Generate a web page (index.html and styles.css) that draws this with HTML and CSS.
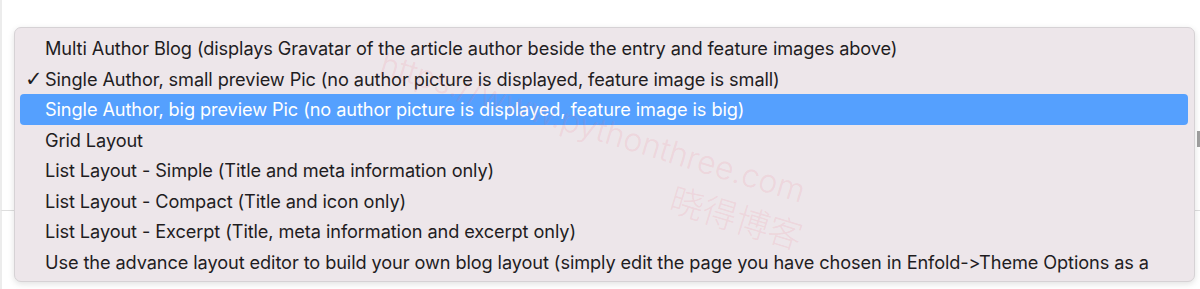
FILE: index.html
```html
<!DOCTYPE html>
<html lang="en">
<head>
    <meta charset="UTF-8">
    <meta name="viewport" content="width=device-width, initial-scale=1.0">
    <title>Blog Layout Select</title>
    <link rel="stylesheet" href="styles.css">
</head>
<body>

    <div class="page">
        <div class="backdrop">
            <div class="backdrop-top"></div>
            <div class="backdrop-bottom"></div>
        </div>
        <div class="scroll-thumb"></div>

        <div class="menu">
            <ul class="options">
                <li class="option">Multi Author Blog (displays Gravatar of the article author beside the entry and feature images above)</li>
                <li class="option checked">Single Author, small preview Pic (no author picture is displayed, feature image is small)</li>
                <li class="option active">Single Author, big preview Pic (no author picture is displayed, feature image is big)</li>
                <li class="option">Grid Layout</li>
                <li class="option">List Layout - Simple (Title and meta information only)</li>
                <li class="option">List Layout - Compact (Title and icon only)</li>
                <li class="option">List Layout - Excerpt (Title, meta information and excerpt only)</li>
                <li class="option">Use the advance layout editor to build your own blog layout (simply edit the page you have chosen in Enfold-&gt;Theme Options as a</li>
            </ul>
            <div class="watermark">
                <span class="wm-url">https://www.pythonthree.com</span>
                <span class="wm-name">晓得博客</span>
            </div>
        </div>
    </div>

</body>
</html>
```

FILE: styles.css
```css
body {
    margin: 0;
    background: #fff;
    font-family: Inter, "Noto Sans", sans-serif;
    color: #1f1d1f;
    overflow: hidden;
}
.page {
    position: relative;
    width: 1200px;
    height: 289px;
}
.backdrop {
    position: absolute;
    left: 0;
    top: 0;
    width: 1200px;
    height: 289px;
}
.backdrop-top {
    height: 211px;
    border-left: 2px solid #ececec;
    border-bottom: 1px solid #dedede;
    box-sizing: border-box;
}
.backdrop-bottom {
    height: 78px;
    border-left: 2px solid #ececec;
    box-sizing: border-box;
}
.scroll-thumb {
    position: absolute;
    left: 1197px;
    top: 131px;
    width: 3px;
    height: 16px;
    background: #a0a0a0;
}
.menu {
    position: absolute;
    left: 14px;
    top: 27px;
    width: 1181px;
    height: 255px;
    box-sizing: border-box;
    background: #ede6ea;
    border: 1px solid #d6d2d5;
    border-radius: 7px;
    box-shadow: 0 2px 6px rgba(0, 0, 0, 0.12);
    padding: 5px 6px 0 5px;
    overflow: hidden;
}
.options {
    list-style: none;
    margin: 0;
    padding: 0;
}
.option {
    position: relative;
    height: 30.5px;
    line-height: 30.5px;
    padding-left: 25px;
    font-size: 18.2px;
    letter-spacing: -0.1px;
    white-space: nowrap;
    border-radius: 4px;
}
.option.checked::before {
    content: "\2713";
    position: absolute;
    left: 5px;
    top: 0;
    font-family: "DejaVu Sans", sans-serif;
    font-weight: bold;
    font-size: 21px;
}
.option.active {
    background: #55a0fe;
    color: #fff;
}
.watermark {
    position: absolute;
    left: 0;
    top: 0;
    color: rgba(240, 110, 130, 0.15);
    pointer-events: none;
}
.wm-url {
    position: absolute;
    left: 372px;
    top: 16px;
    font-size: 32px;
    font-weight: 300;
    white-space: nowrap;
    transform: rotate(17deg);
    transform-origin: left top;
}
.wm-name {
    position: absolute;
    left: 664px;
    top: 145px;
    font-family: "Noto Sans CJK SC", sans-serif;
    font-size: 34px;
    font-weight: 300;
    white-space: nowrap;
    transform: rotate(17deg);
    transform-origin: left top;
}
```
